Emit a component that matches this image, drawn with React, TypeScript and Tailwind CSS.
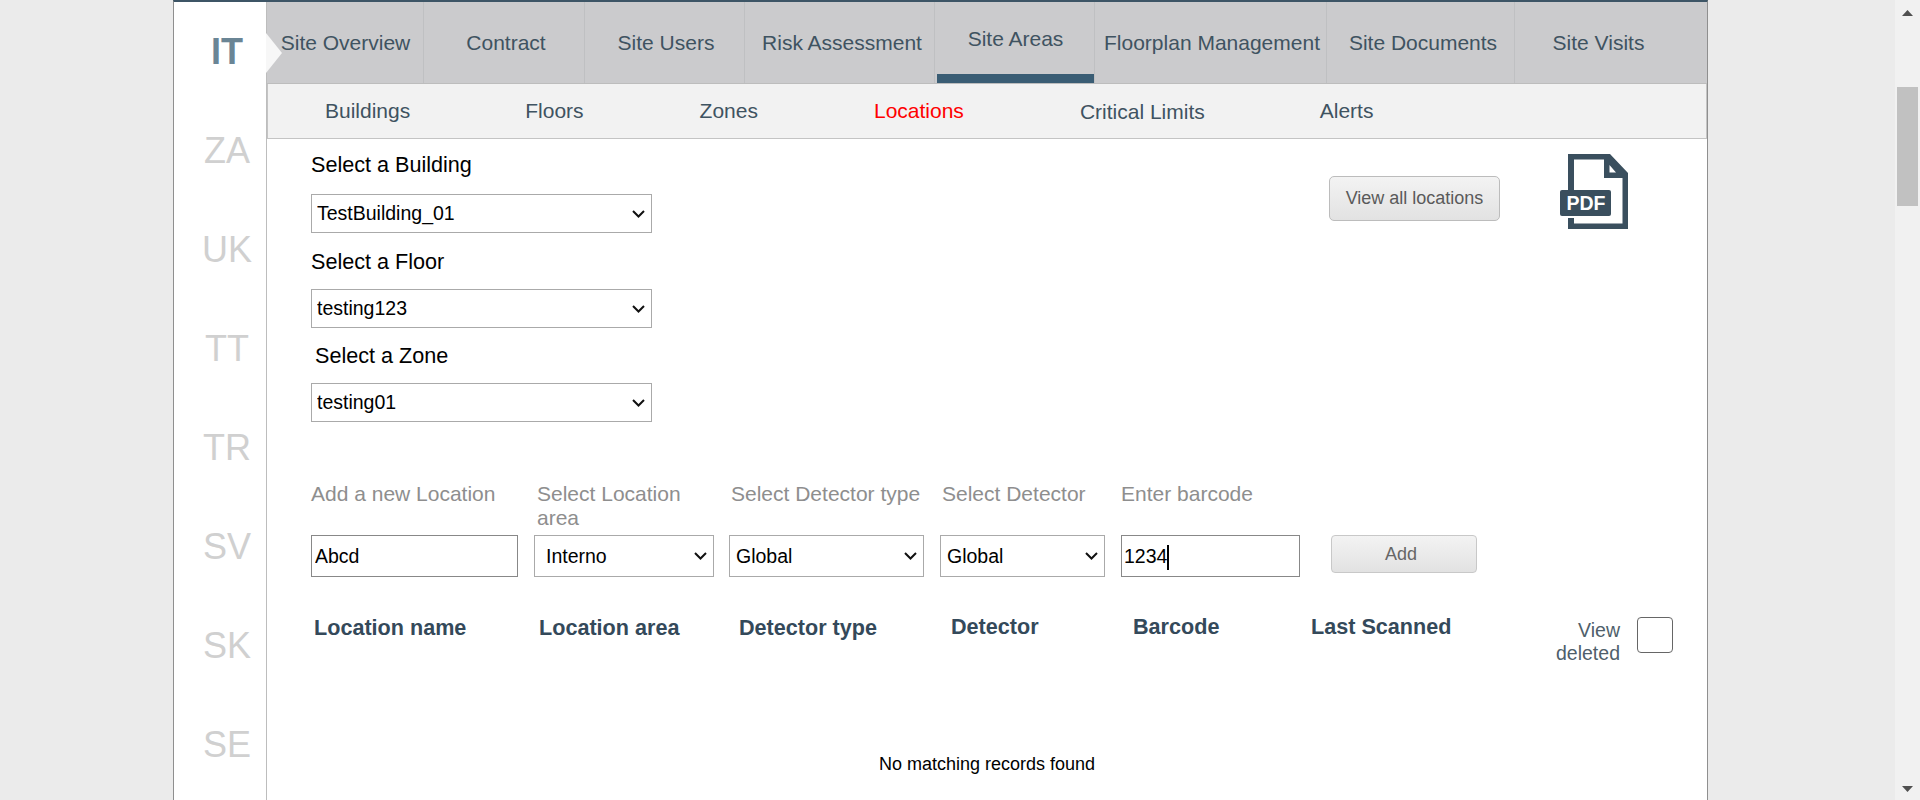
const tabs = [
  { label: "Site Overview", width: "w-[157px] pl-[1px]" },
  { label: "Contract", width: "w-[161px] pl-[4px]" },
  { label: "Site Users", width: "w-[160px] pl-[3px]" },
  { label: "Risk Assessment", width: "w-[190px] pl-[5px]" },
  { label: "Site Areas", width: "w-[160px] pl-[2px]", active: true },
  { label: "Floorplan Management", width: "w-[232px] pl-[3px]" },
  { label: "Site Documents", width: "w-[188px] pl-[5px]" },
  { label: "Site Visits", width: "w-[165px] pl-[2px]", last: true },
];

const subTabs = [
  { label: "Buildings", extra: "" },
  { label: "Floors", extra: "" },
  { label: "Zones", extra: "ml-[1px]" },
  { label: "Locations", extra: "ml-[1px] text-[#ff0000]" },
  { label: "Critical Limits", extra: "mt-[2px] ml-[1px]" },
  { label: "Alerts", extra: "" },
];
const countries = ["IT", "ZA", "UK", "TT", "TR", "SV", "SK", "SE"];

function PdfIcon() {
  return (
    <svg width="68" height="75" viewBox="0 0 68 75" className="shrink-0">
      <path
        fillRule="evenodd"
        fill="#3a4f5e"
        d="M8 0H50L68 19V75H8ZM14 5.5V69.5H62.5V24H44V5.5ZM49.5 11V18.5H56Z"
      />
      <rect x="8" y="60" width="6" height="4" fill="#ffffff" />
      <rect x="0" y="36" width="51" height="26" rx="2" fill="#3a4f5e" />
      <text
        x="26"
        y="56"
        textAnchor="middle"
        fontFamily="Liberation Sans"
        fontWeight="700"
        fontSize="19.5"
        fill="#ffffff"
      >
        PDF
      </text>
    </svg>
  );
}

function Chevron() {
  return (
    <svg
      width="13"
      height="8"
      viewBox="0 0 13 8"
      className="pointer-events-none absolute top-1/2 right-[7px] -translate-y-1/2"
    >
      <path d="M1 1L6.5 6.5L12 1" fill="none" stroke="#111111" strokeWidth="2" />
    </svg>
  );
}

function Select({ value, className, pad }: { value: string; className: string; pad: string }) {
  return (
    <div className={`relative ${className}`}>
      <select
        defaultValue={value}
        className={`block h-full w-full appearance-none border border-[#aaaaaa] bg-white text-[19.5px] text-black ${pad}`}
      >
        <option>{value}</option>
      </select>
      <Chevron />
    </div>
  );
}

function Scrollbar() {
  return (
    <div className="flex h-[800px] w-[25px] shrink-0 flex-col items-center bg-[#f1f1f1] pt-[10px]">
      <svg width="11" height="6" viewBox="0 0 11 6">
        <path d="M5.5 0L11 6H0Z" fill="#505050" />
      </svg>
      <div className="mt-[71px] h-[119px] w-[21px] bg-[#c1c1c1]" />
      <svg width="11" height="6" viewBox="0 0 11 6" className="mt-auto mb-[8px]">
        <path d="M0 0H11L5.5 6Z" fill="#505050" />
      </svg>
    </div>
  );
}

export default function App() {
  return (
    <div className="flex h-[800px] w-full overflow-hidden bg-[#ebebeb] font-['Liberation_Sans',Arial,sans-serif]">
      <div className="flex-1 pl-[173px]">
        <div className="flex h-[800px] w-[1535px] border-x border-t-2 border-x-[#8f8f8f] border-t-[#3d5566] bg-white">
          {/* country list */}
          <div className="relative flex w-[93px] shrink-0 flex-col items-center border-r border-[#bdbdbd] pt-[29px] pl-[14px]">
            {countries.map((c, i) => (
              <div
                key={c}
                className={`h-[99px] shrink-0 text-[36px] leading-[41px] ${
                  i === 0 ? "font-bold text-[#6a8595]" : "text-[#d0d0d0]"
                }`}
              >
                {c}
              </div>
            ))}
            <div className="absolute top-[31px] right-[-16px] z-10 h-0 w-0 border-y-[20px] border-l-[16px] border-y-transparent border-l-[#f7f7f7]" />
          </div>

          <div className="min-w-0 flex-1">
            {/* main tabs */}
            <div className="flex h-[82px] border-b border-[#bdbdbd] bg-[#cbcbcd]">
              {tabs.map((t) => (
                <div
                  key={t.label}
                  className={`flex shrink-0 flex-col items-center text-[21px] whitespace-nowrap text-[#3f5361] ${t.width} ${
                    t.last ? "" : "border-r border-[#bfc0c2]"
                  } ${t.active ? "pt-[21px]" : "pt-[25px]"}`}
                >
                  {t.label}
                  {t.active && <div className="mt-auto h-[9px] self-stretch bg-[#3a5d74]" />}
                </div>
              ))}
            </div>

            {/* sub tabs */}
            <div className="flex h-[55px] items-center gap-[115px] border-x border-b border-[#c4c4c4] bg-[#f2f2f2] pl-[57px] text-[21px] text-[#3f5361]">
              {subTabs.map((s) => (
                <div key={s.label} className={s.extra}>
                  {s.label}
                </div>
              ))}
            </div>

            <div className="pl-[44px] pr-[34px]">
              {/* site selectors */}
              <div className="flex h-[343px] items-start">
                <div className="w-[1018px] shrink-0 pt-[14px] text-[21.6px] text-black">
                  <div className="mb-[18px] leading-[23px]">Select a Building</div>
                  <Select value="TestBuilding_01" className="h-[39px] w-[341px]" pad="pl-[5px]" />
                  <div className="mt-[17px] mb-[16px] leading-[23px]">Select a Floor</div>
                  <Select value="testing123" className="h-[39px] w-[341px]" pad="pl-[5px]" />
                  <div className="mt-[16px] mb-[16px] pl-[4px] leading-[23px]">Select a Zone</div>
                  <Select value="testing01" className="h-[39px] w-[341px]" pad="pl-[5px]" />
                </div>
                <button className="mt-[37px] h-[45px] w-[171px] rounded-[5px] border border-[#bcbcbc] bg-gradient-to-b from-[#f3f3f3] to-[#e2e2e2] text-[18px] text-[#5a5a5a]">
                  View all locations
                </button>
                <div className="mt-[15px] ml-[60px]">
                  <PdfIcon />
                </div>
              </div>

              {/* add location */}
              <div className="flex items-end text-[21px] leading-[24px] text-[#8e8e8e]">
                <div className="mr-[16px] w-[207px]">
                  <div className="mb-[29px] whitespace-nowrap">Add a new Location</div>
                  <input defaultValue="Abcd" className="block h-[42px] w-full border border-[#888888] px-[3px] text-[19.5px] text-black" />
                </div>
                <div className="mr-[15px] w-[180px]">
                  <div className="mb-[5px] pl-[3px]">Select Location area</div>
                  <Select value="Interno" className="h-[42px] w-full" pad="pl-[11px]" />
                </div>
                <div className="mr-[16px] w-[195px]">
                  <div className="mb-[29px] pl-[2px] whitespace-nowrap">Select Detector type</div>
                  <Select value="Global" className="h-[42px] w-full" pad="pl-[6px]" />
                </div>
                <div className="mr-[16px] w-[165px]">
                  <div className="mb-[29px] pl-[2px] whitespace-nowrap">Select Detector</div>
                  <Select value="Global" className="h-[42px] w-full" pad="pl-[6px]" />
                </div>
                <div className="relative mr-[31px] w-[179px]">
                  <div className="mb-[29px] whitespace-nowrap">Enter barcode</div>
                  <input defaultValue="1234" className="block h-[42px] w-full border border-[#888888] px-[2px] text-[19.5px] text-black" />
                  <div className="absolute bottom-[7px] left-[46px] h-[25px] w-[2px] bg-black" />
                </div>
                <button className="mb-[4px] h-[38px] w-[146px] rounded-[4px] border border-[#c8c8c8] bg-gradient-to-b from-[#f3f3f3] to-[#e2e2e2] pr-[6px] text-[18px] text-[#666666]">
                  Add
                </button>
              </div>

              {/* table header */}
              <div className="mt-[34px] flex h-[100px] items-start text-[21.6px] font-bold text-[#34495a]">
                <div className="w-[226px] pl-[3px] pt-[1px]">Location name</div>
                <div className="w-[201px] pl-[2px] pt-[1px]">Location area</div>
                <div className="w-[212px] pl-[1px] pt-[1px]">Detector type</div>
                <div className="w-[183px] pl-[1px]">Detector</div>
                <div className="w-[178px]">Barcode</div>
                <div className="w-[245px]">Last Scanned</div>
                <div className="flex items-start gap-[17px] text-[19.5px] font-normal">
                  <div className="pt-[8px] text-right leading-[23px] text-[#4f5f6b]">
                    View
                    <br />
                    deleted
                  </div>
                  <div className="mt-[6px] h-[36px] w-[36px] rounded-[4px] border border-[#666666] bg-white" />
                </div>
              </div>

              <div className="mt-[40px] pr-[10px] text-center text-[18px] text-black">No matching records found</div>
            </div>
          </div>
        </div>
      </div>
      <Scrollbar />
    </div>
  );
}
